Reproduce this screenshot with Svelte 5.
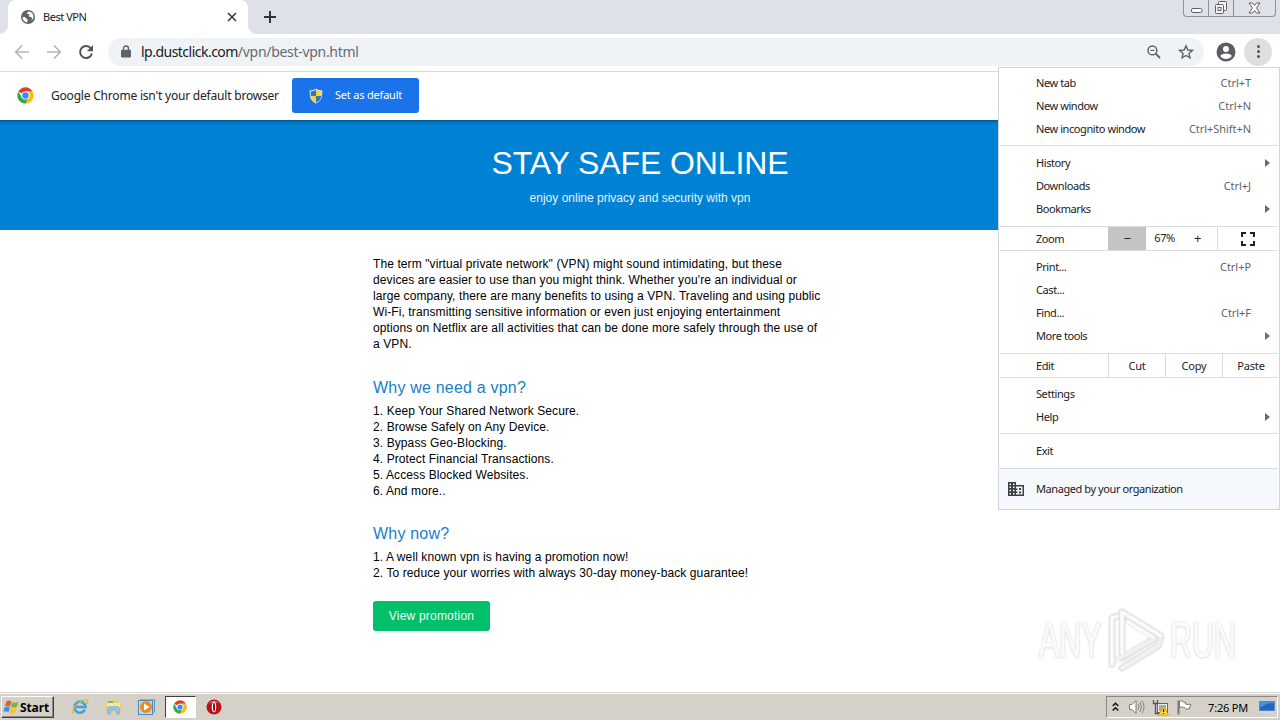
<script>
  const reasons = [
    'Keep Your Shared Network Secure.',
    'Browse Safely on Any Device.',
    'Bypass Geo-Blocking.',
    'Protect Financial Transactions.',
    'Access Blocked Websites.',
    'And more..'
  ];

  const offers = [
    'A well known vpn is having a promotion now!',
    'To reduce your worries with always 30-day money-back guarantee!'
  ];

  const windowItems = [
    { label: 'New tab', keys: 'Ctrl+T' },
    { label: 'New window', keys: 'Ctrl+N' },
    { label: 'New incognito window', keys: 'Ctrl+Shift+N' }
  ];

  const libraryItems = [
    { label: 'History', submenu: true },
    { label: 'Downloads', keys: 'Ctrl+J' },
    { label: 'Bookmarks', submenu: true }
  ];

  const pageItems = [
    { label: 'Print...', keys: 'Ctrl+P' },
    { label: 'Cast...' },
    { label: 'Find...', keys: 'Ctrl+F' },
    { label: 'More tools', submenu: true }
  ];

  const settingsItems = [{ label: 'Settings' }, { label: 'Help', submenu: true }];

  let zoom = $state(67);
  let menuOpen = $state(true);
</script>

{#snippet group(items, name)}
  <div class="menu-group {name}">
    {#each items as item}
      <div class="menu-item">
        <span class="label">{item.label}</span>
        {#if item.keys}<span class="keys">{item.keys}</span>{/if}
        {#if item.submenu}<span class="arrow"></span>{/if}
      </div>
    {/each}
  </div>
{/snippet}

{#snippet chromeLogo(size)}
  <svg width={size} height={size} viewBox="0 0 48 48">
    <circle cx="24" cy="24" r="23" fill="#fff" />
    <path d="M24 24 4.1 12.5A23 23 0 0 1 43.9 12.5H24Z" fill="#e33b2e" />
    <path d="M4.1 12.5A23 23 0 0 0 24 47L34 29.8 24 24 14 29.8Z" fill="#2da94f" />
    <path d="M43.9 12.5A23 23 0 0 1 24 47L34 29.8A11.5 11.5 0 0 0 24 12.5Z" fill="#fdbd00" />
    <circle cx="24" cy="24" r="11.5" fill="#fff" />
    <circle cx="24" cy="24" r="9" fill="#4285f4" />
  </svg>
{/snippet}

<div class="screen">
  <div class="tab-strip">
    <div class="tab">
      <svg width="14" height="14" viewBox="0 0 14 14">
        <circle cx="7" cy="7" r="7" fill="#5f6368" />
        <path d="M1.5 7.2c1.7-.3 3.4.2 3.6 1.1.3 1 1.7.8 1.7 1.8 0 .9-.7 1.3-.8 2.3-2.6-.4-4.5-2.6-4.5-5.2ZM7.5 1.5c-.7.8-1.7 1-1.4 2 .3.8 1.8.2 2.3 1 .4.8-1 1.2-.4 2 .6.8 1.900.1 2.600.9.6.7.3 1.800-.1 2.900 1.300-1 2-2.100 2-3.500 0-3-2.200-5.200-5-5.300Z" fill="#fff" />
      </svg>
      <span class="tab-title">Best VPN</span>
      <svg class="close" width="10" height="10" viewBox="0 0 10 10">
        <path d="M1 1 9 9M9 1 1 9" stroke="#3c4043" stroke-width="1.7" />
      </svg>
    </div>
    <svg class="new-tab" width="12" height="12" viewBox="0 0 12 12">
      <path d="M6 0V12M0 6H12" stroke="#303338" stroke-width="2" />
    </svg>
    <div class="window-buttons">
      <div class="win-btn small">
        <svg width="13" height="14" viewBox="0 0 13 14"><rect x="1.5" y="7.5" width="10.5" height="4" rx="1.5" fill="#fff" stroke="#5d6168" /></svg>
      </div>
      <div class="win-btn">
        <svg width="14" height="14" viewBox="0 0 14 14" fill="#f3f4f6" stroke="#5d6168"><rect x="4.5" y=".5" width="8" height="9" rx="1" /><rect x="1.5" y="3.5" width="8" height="9" rx="1" /><rect x="4" y="6.5" width="3" height="3" /></svg>
      </div>
      <div class="win-btn wide">
        <svg width="13" height="12" viewBox="0 0 13 12"><path d="M1 1h3.500L6.500 3.500 8.500 1H12L8.500 6 12 11H8.500L6.500 8.500 4.500 11H1L4.500 6Z" fill="#fff" stroke="#5d6168" /></svg>
      </div>
    </div>
  </div>

  <div class="toolbar">
    <svg class="nav-icon" width="16" height="16" viewBox="0 0 16 16" fill="none" stroke="#b4b6b9" stroke-width="1.7"><path d="M15 8H2M8 1.500 1.700 8 8 14.500" /></svg>
    <svg class="nav-icon" width="16" height="16" viewBox="0 0 16 16" fill="none" stroke="#b4b6b9" stroke-width="1.7"><path d="M1 8H14M8 1.500 14.300 8 8 14.500" /></svg>
    <svg class="nav-icon" width="16" height="16" viewBox="0 0 16 16"><path d="M12.900 4.400A6 6 0 1 0 13.900 9.500" fill="none" stroke="#505458" stroke-width="2" /><path d="M15 1V7.200H8.800Z" fill="#505458" /></svg>
    <div class="omnibox">
      <svg width="10" height="13" viewBox="0 0 10 13"><path d="M2.500 6V3.500a2.500 2.500 0 0 1 5 0V6" fill="none" stroke="#5f6368" stroke-width="1.4" /><rect y="4.7" width="10" height="7.8" rx="1" fill="#5f6368" /></svg>
      <span class="url"><span class="host">lp.dustclick.com</span><span class="path">/vpn/best-vpn.html</span></span>
      <svg class="zoom-icon" width="14" height="14" viewBox="0 0 14 14" fill="none" stroke="#5f6368" stroke-width="1.5"><circle cx="5.4" cy="5.4" r="4.4" /><path d="M8.600 8.600 13 13" stroke-width="1.9" /><path d="M3.400 5.400H7.400" stroke-width="1.2" /></svg>
      <svg class="star" width="16" height="16" viewBox="0 0 16 16"><path d="M8 1.800 9.800 6 14.400 6.400 10.900 9.400 12 13.900 8 11.500 4 13.900 5.100 9.400 1.600 6.400 6.200 6Z" fill="none" stroke="#5f6368" stroke-width="1.4" /></svg>
    </div>
    <svg class="avatar" width="20" height="20" viewBox="0 0 20 20"><circle cx="10" cy="10" r="9.5" fill="#5a5e63" /><circle cx="10" cy="7" r="3" fill="#fff" /><path d="M4.200 14C5.200 12.200 8 11.500 10 11.500s4.800.7 5.800 2.500a7 7 0 0 1-11.600 0Z" fill="#fff" /></svg>
    <button class="menu-button" aria-label="Menu" onclick={() => (menuOpen = !menuOpen)}>
      <i></i><i></i><i></i>
    </button>
  </div>

  <div class="infobar">
    {@render chromeLogo(17)}
    <span class="info-text">Google Chrome isn't your default browser</span>
    <button class="default-button">
      <svg width="14" height="16" viewBox="0 0 14 16">
        <path d="M7 .5C5 2 3 2.200.7 2.300.500 9 1.500 13 7 15.500 12.500 13 13.500 9 13.300 2.300 11 2.200 9 2 7 .5Z" fill="#dbe5ea" />
        <path d="M7 1.700C5.300 3 3.600 3.200 1.800 3.300V8H7Z" fill="#2d76c2" /><path d="M7 1.700C8.700 3 10.400 3.200 12.200 3.300V8H7Z" fill="#fbd328" />
        <path d="M1.800 8C2.300 11.300 3.500 13 7 14.500V8Z" fill="#fbd328" /><path d="M12.200 8C11.700 11.300 10.500 13 7 14.500V8Z" fill="#2d76c2" />
      </svg>
      <span>Set as default</span>
    </button>
  </div>

  <main>
    <header>
      <h1>STAY SAFE ONLINE</h1>
      <p>enjoy online privacy and security with vpn</p>
    </header>
    <article>
      <p class="intro">
        The term "virtual private network" (VPN) might sound intimidating, but these<br />
        devices are easier to use than you might think. Whether you're an individual or<br />
        large company, there are many benefits to using a VPN. Traveling and using public<br />
        Wi-Fi, transmitting sensitive information or even just enjoying entertainment<br />
        options on Netflix are all activities that can be done more safely through the use of<br />
        a VPN.
      </p>
      <h2>Why we need a vpn?</h2>
      <div class="list">
        {#each reasons as reason, i}
          <div>{i + 1}. {reason}</div>
        {/each}
      </div>
      <h2>Why now?</h2>
      <div class="list">
        {#each offers as offer, i}
          <div>{i + 1}. {offer}</div>
        {/each}
      </div>
      <button class="promo">View promotion</button>
    </article>
  </main>

  <div class="taskbar">
    <div class="start">
      <svg width="17" height="16" viewBox="0 0 17 16">
        <path d="M3.500 2.500C5.500 1 7 1.500 8.500 2.500L7 7.500C5.500 6.500 4 6.300 2 7.300Z" fill="#e8592b" />
        <path d="M9.300 3C11 4 13 4 15.500 2.500L14 7.500C12 9 9.700 9 7.800 8Z" fill="#76b83f" />
        <path d="M1.700 8.200C3.700 7.200 5.300 7.500 6.800 8.500L5.400 13.300C3.700 12.200 2.200 12 .3 13Z" fill="#3b8ede" />
        <path d="M7.600 9C9.500 10 11.500 10 13.700 8.500L12.300 13.200C10 15 8 14.500 6.200 13.700Z" fill="#f8c42d" />
      </svg>
      <span>Start</span>
    </div>
    <div class="quick">
      <svg width="18" height="18" viewBox="0 0 18 18">
        <path d="M14 11.500A5.500 5.500 0 1 1 14.500 9H5" fill="none" stroke="#38a3dc" stroke-width="2.6" />
        <path d="M2 15.500C-.500 12 9 1 15.500 2.200 17.500 2.800 16.500 5 15.500 6" fill="none" stroke="#dfb63a" stroke-width="1.3" />
      </svg>
    </div>
    <div class="quick">
      <svg width="17" height="16" viewBox="0 0 17 16">
        <path d="M1 2.500H6L7.500 1H13V4H16V13H1Z" fill="#edcc68" /><path d="M2 4H15V8H2Z" fill="#f9e79f" /><path d="M3 3H8" stroke="#4eb56d" stroke-width="1.5" />
        <path d="M2.500 15V9.500Q2.500 7.500 5 7.500H12Q14.500 7.500 14.500 9.500V15H11.500V11H5.500V15Z" fill="#8cc7eb" stroke="#62a3ca" stroke-width=".5" />
      </svg>
    </div>
    <div class="quick">
      <svg width="17" height="16" viewBox="0 0 17 16">
        <rect x="3" y="0" width="13.5" height="13" fill="#acd3ec" stroke="#5695c4" /><rect x=".5" y="1.5" width="14" height="14" fill="#b8dcf2" stroke="#4b8bbe" />
        <circle cx="8" cy="8" r="6" fill="#f18a1b" /><path d="M6 4.500V11.500L11.500 8Z" fill="#fff" />
      </svg>
    </div>
    <div class="quick pressed">{@render chromeLogo(14)}</div>
    <div class="quick">
      <svg width="16" height="16" viewBox="0 0 16 16"><circle cx="8" cy="8" r="7.5" fill="#bd1119" /><path d="M2.500 4.500A7 7 0 0 1 13.500 4.500Q8 1.800 2.500 4.500Z" fill="#e57a75" /><ellipse cx="8" cy="8" rx="2.2" ry="5.3" fill="#fff" /><ellipse cx="8" cy="8" rx="1" ry="4.5" fill="#8b0c12" /></svg>
    </div>
    <div class="tray">
      <svg class="chevrons" width="7" height="10" viewBox="0 0 7 10" fill="none" stroke="#111" stroke-width="1.5"><path d="M.7 4 3.500 1.300 6.300 4M.7 8.500 3.500 5.800 6.300 8.500" /></svg>
      <svg class="speaker" width="17" height="16" viewBox="0 0 17 16"><path d="M1.500 5.500H4L8 1.500V14.500L4 10.500H1.500Z" fill="#fbfbfb" stroke="#7c7c7c" /><path d="M10 5Q12 8 10 11M12 3Q15 8 12 13M14 1.500Q18 8 14 14.500" fill="none" stroke="#858585" /></svg>
      <svg class="network" width="17" height="17" viewBox="0 0 17 17"><rect x="5.5" y="4.5" width="10" height="9" fill="#eee" stroke="#666" /><rect x="7" y="6" width="7" height="6" fill="#aaa" /><path d="M1.500 1V4.500H5.500V1M3.500 4.500V14.500H8" fill="none" stroke="#555" stroke-width="1.3" /><path d="M11.500 7 16.500 16H6.500Z" fill="#fddb26" stroke="#c79412" stroke-width=".7" /><path d="M11.500 10V13M11.500 14V15" stroke="#222" stroke-width="1.2" /></svg>
      <svg class="flag" width="16" height="16" viewBox="0 0 16 16"><path d="M2.500 15.500V1.500" stroke="#777" stroke-width="2" /><path d="M3.500 2C6 1 7 3.500 9.500 3.500V5C11.500 6 13 5 15 5.500L13 10C10 10.500 8.500 9.500 8.500 8.500 6.500 8.500 6 7.500 3.500 8.500Z" fill="#fff" stroke="#777" /></svg>
      <span class="clock">7:26 PM</span>
      <svg class="desktop" width="16" height="13" viewBox="0 0 16 13"><path d="M.5.500H15.500V9.500H.5Z" fill="#2468bd" stroke="#5686bd" /><path d="M1 7Q7 2 15 2V1H1Z" fill="#4b92dc" /><path d="M1 11.500H15" stroke="#cddaea" stroke-width="1.5" /></svg>
    </div>
  </div>

  {#if menuOpen}
    <div class="menu">
      {@render group(windowItems, 'first')}
      {@render group(libraryItems, 'library')}
      <div class="menu-row">
        <span class="row-label">Zoom</span>
        <button class="zoom-out" aria-label="Zoom out" onclick={() => (zoom -= 1)}>−</button>
        <span class="zoom-value">{zoom}%</span>
        <button class="zoom-in" aria-label="Zoom in" onclick={() => (zoom += 1)}>+</button>
        <button class="fullscreen" aria-label="Full screen">
          <svg width="14" height="14" viewBox="0 0 14 14" fill="none" stroke="#202124" stroke-width="2"><path d="M1 5V1H5M9 1H13V5M13 9V13H9M5 13H1V9" /></svg>
        </button>
      </div>
      {@render group(pageItems, 'page')}
      <div class="menu-row">
        <span class="row-label">Edit</span>
        <button class="edit">Cut</button>
        <button class="edit">Copy</button>
        <button class="edit">Paste</button>
      </div>
      {@render group(settingsItems, 'settings')}
      {@render group([{ label: 'Exit' }], 'exit')}
      <div class="managed">
        <svg width="16" height="14" viewBox="0 0 16 14"><path d="M0 0H8V3H16V14H0Z" fill="#3c4043" /><path d="M1.500 1.500H3V3H1.500ZM5 1.500H6.500V3H5ZM1.500 4.500H3V6H1.500ZM5 4.500H6.500V6H5ZM1.500 7.700H3V9.200H1.500ZM5 7.700H6.500V9.200H5ZM1.500 11H3V12.500H1.500ZM5 11H6.500V12.500H5ZM8 4.500H14.500V12.500H8V11H9.500V9.500H8V8H9.500V6.500H8Z" fill="#f5f8fc" /><path d="M11 6H13V8H11ZM11 9.500H13V11.500H11Z" fill="#3c4043" /></svg>
        <span>Managed by your organization</span>
      </div>
    </div>
  {/if}

  <div class="watermark">
    <span>ANY</span>
    <svg width="56" height="64" viewBox="0 0 56 64" fill="none" stroke-linejoin="round" stroke-linecap="round">
      <g stroke="#e4e4e4" stroke-width="6">
        <path d="M4 56V10L9 8M14 4V45M14 4 53 28M20 12 48 30M53 28 50 38 14 60M14 50 46 31" />
      </g>
      <g stroke="#fbfbfb" stroke-width="3.5">
        <path d="M4 56V10L9 8M14 45V4L53 28M20 14 46 30" />
      </g>
      <g stroke="#f1f1f1" stroke-width="3.5">
        <path d="M52 32 50 38 14 60M8 52 46 31" />
      </g>
    </svg>
    <span>RUN</span>
  </div>
</div>

<style>
  :global(body) {
    overflow: hidden;
  }

  .screen {
    position: relative;
    display: flex;
    flex-direction: column;
    width: 1280px;
    height: 720px;
    overflow: hidden;
    background: #fff;
    font-family: 'Noto Sans', sans-serif;
    font-size: 11px;
    color: #202124;
  }

  button {
    margin: 0;
    padding: 0;
    border: none;
    background: none;
    font: inherit;
    color: inherit;
    letter-spacing: inherit;
  }

  svg {
    display: block;
    flex: none;
  }

  .tab-strip {
    display: flex;
    height: 34px;
    flex: none;
    padding-left: 8px;
    background: #dee1e7;
  }

  .tab {
    position: relative;
    display: flex;
    align-items: center;
    width: 240px;
    box-sizing: border-box;
    padding: 0 11px 0 13px;
    border-radius: 8px 8px 0 0;
    background: #fff;
  }

  /* flared feet where the tab meets the toolbar */
  .tab::before,
  .tab::after {
    content: '';
    position: absolute;
    bottom: 0;
    width: 8px;
    height: 8px;
  }

  .tab::before {
    left: -8px;
    background: radial-gradient(circle at 0 0, #dee1e7 7.5px, #fff 8px);
  }

  .tab::after {
    right: -8px;
    background: radial-gradient(circle at 100% 0, #dee1e7 7.5px, #fff 8px);
  }

  .tab-title {
    margin-left: 8px;
    padding-bottom: 2px;
    letter-spacing: -0.45px;
  }

  .close {
    margin-left: auto;
  }

  .new-tab {
    margin: 11px 0 0 16px;
  }

  .window-buttons {
    display: flex;
    height: 17px;
    margin: 0 4px 0 auto;
    border: 1px solid #8d9198;
    border-top: none;
    border-radius: 0 0 4px 4px;
    box-sizing: border-box;
  }

  .win-btn {
    display: flex;
    align-items: center;
    justify-content: center;
    width: 25px;
    box-sizing: border-box;
    border-right: 1px solid #8d9198;
  }

  .wide {
    width: 41px;
    border-right: none;
  }

  .toolbar {
    display: flex;
    align-items: center;
    height: 38px;
    flex: none;
    box-sizing: border-box;
    padding: 0 8px 2px 14px;
    border-bottom: 1px solid #dcdcdc;
  }

  .nav-icon {
    margin-right: 16px;
  }

  .omnibox {
    display: flex;
    align-items: center;
    width: 1096px;
    height: 28px;
    box-sizing: border-box;
    margin-left: -2px;
    padding: 0 10px 0 13px;
    border-radius: 14px;
    background: #f0f3f6;
  }

  .url {
    margin-left: 10px;
    font-size: 14px;
    white-space: nowrap;
  }

  .host {
    letter-spacing: -0.52px;
  }

  .path {
    color: #666a6e;
    letter-spacing: -0.3px;
  }

  .zoom-icon {
    margin-left: auto;
  }

  .star {
    margin-left: 17px;
  }

  .avatar {
    margin-left: 12px;
  }

  .menu-button {
    display: flex;
    flex-direction: column;
    align-items: center;
    justify-content: center;
    gap: 2px;
    width: 28px;
    height: 28px;
    margin-left: 8px;
    border-radius: 50%;
    background: #dedfe0;
  }

  .menu-button i {
    width: 3px;
    height: 3px;
    border-radius: 50%;
    background: #505458;
  }

  .infobar {
    display: flex;
    align-items: center;
    height: 48px;
    flex: none;
    box-sizing: border-box;
    padding: 0 0 1px 17px;
  }

  .info-text {
    width: 228px;
    margin: 0 13px 0 17px;
    padding-bottom: 1px;
    font-size: 12px;
    letter-spacing: -0.2px;
    white-space: nowrap;
  }

  .default-button {
    display: flex;
    align-items: center;
    width: 127px;
    height: 35px;
    padding-left: 17px;
    border-radius: 3px;
    background: #1a73e8;
    color: #fff;
  }

  .default-button span {
    margin-left: 12px;
    padding-bottom: 2px;
    letter-spacing: -0.2px;
  }

  main {
    flex: 1;
    font-family: 'Liberation Sans', Arial, sans-serif;
  }

  header {
    height: 110px;
    box-sizing: border-box;
    padding-top: 23px;
    background: linear-gradient(#005485, #0074bc 2px, #0082d4 5px);
    color: #fff;
    text-align: center;
  }

  h1 {
    margin: 0;
    font-size: 32px;
    font-weight: 400;
    line-height: 40px;
    letter-spacing: -0.1px;
  }

  header p {
    margin: 7px 0 0;
    font-size: 12px;
    line-height: 16px;
    color: #e3f2fc;
  }

  article {
    width: 534px;
    margin: 26px auto 0;
    font-size: 12px;
    line-height: 16px;
    letter-spacing: 0.1px;
    color: #000;
    white-space: nowrap;
  }

  .intro {
    margin: 0;
    padding-bottom: 1px;
  }

  h2 {
    height: 20px;
    margin: 25px 0 5px;
    font-size: 16px;
    font-weight: 400;
    line-height: 20px;
    letter-spacing: 0.2px;
    color: #1680c8;
  }

  .promo {
    display: block;
    width: 117px;
    height: 30px;
    margin-top: 20px;
    border-radius: 3px;
    background: #02bf6b;
    color: #eafff5;
    letter-spacing: 0.2px;
  }

  .taskbar {
    display: flex;
    align-items: center;
    height: 28px;
    flex: none;
    box-sizing: border-box;
    padding: 1px 2px 0 1px;
    border-top: 1px solid #d6d3ce;
    background: #d5d1c9;
    box-shadow: inset 0 1px #fff;
  }

  .start {
    display: flex;
    align-items: center;
    width: 53px;
    height: 22px;
    box-sizing: border-box;
    margin-right: 10px;
    padding-left: 1px;
    border: 1px solid;
    border-color: #fff #404040 #404040 #fff;
    box-shadow: inset -1px -1px #888;
    font-size: 12px;
    font-weight: 700;
    color: #000;
  }

  .start span {
    letter-spacing: -0.1px;
  }

  .quick {
    display: flex;
    align-items: center;
    justify-content: center;
    width: 31px;
    height: 22px;
    margin-right: 2.6px;
    box-sizing: border-box;
  }

  .pressed {
    border: 1px solid;
    border-color: #404040 #fff #fff #404040;
    background: #fdfdfc;
  }

  .tray {
    display: flex;
    align-items: center;
    width: 172px;
    height: 22px;
    box-sizing: border-box;
    margin-left: auto;
    padding: 0 2px 0 5px;
    border: 1px solid;
    border-color: #888 #fff #fff #888;
    color: #000;
  }

  .speaker {
    margin-left: 9px;
  }

  .network {
    margin-left: 7px;
  }

  .flag {
    margin-left: 7px;
  }

  .clock {
    margin-left: auto;
    letter-spacing: -0.2px;
  }

  .desktop {
    margin-left: 11px;
  }

  .menu {
    position: absolute;
    top: 67px;
    left: 998px;
    width: 282px;
    height: 443px;
    box-sizing: border-box;
    border: 1px solid #d3d5d8;
    background: #fff;
    letter-spacing: -0.42px;
  }

  .menu-group,
  .menu-row {
    margin: 0 1px;
    border-bottom: 1px solid #dadce0;
  }

  .first {
    padding: 4px 0;
  }

  .library,
  .exit {
    padding: 6px 0 5px;
  }

  .page {
    padding: 5px 0;
  }

  .settings {
    padding: 5px 0 4px;
  }

  .menu-item {
    display: flex;
    align-items: center;
    height: 23px;
    box-sizing: border-box;
    padding: 0 0 2px 36px;
  }

  .keys {
    margin: 0 27px 0 auto;
    color: #5f6368;
    letter-spacing: -0.05px;
  }

  .arrow {
    margin: 0 8px 0 auto;
    border: 4px solid transparent;
    border-left: 5px solid #6b6b6b;
    border-right: none;
  }

  .menu-row {
    display: flex;
    height: 23px;
    line-height: 23px;
  }

  .row-label {
    width: 72px;
    flex: none;
    padding-left: 36px;
  }

  .zoom-out {
    width: 38px;
    padding-bottom: 2px;
    background: #c4c4c4;
    font-size: 13px;
  }

  .zoom-value {
    width: 37px;
    line-height: 22px;
    text-align: center;
  }

  .zoom-in {
    width: 29px;
    margin-right: 5px;
    padding-bottom: 2px;
    font-size: 13px;
  }

  .fullscreen {
    display: flex;
    align-items: center;
    justify-content: center;
    flex: 1;
    border-left: 1px solid #dadce0;
  }

  .edit {
    width: 57px;
    flex: none;
    box-sizing: border-box;
    padding-bottom: 2px;
    border-left: 1px solid #dadce0;
    letter-spacing: -0.2px;
  }

  .managed {
    display: flex;
    align-items: center;
    height: 40px;
    padding-left: 9px;
    background: #f5f8fc;
  }

  .managed span {
    margin-left: 12px;
    padding-bottom: 2px;
  }

  .watermark {
    position: absolute;
    top: 608px;
    left: 1039px;
    display: flex;
    align-items: center;
    width: 196px;
    height: 64px;
    font-family: 'Liberation Sans Narrow', 'Liberation Sans', sans-serif;
    font-size: 50px;
    color: #fafafa;
    -webkit-text-stroke: 1px #fafafa;
    text-shadow: 0 0 2px #c4c4c4, 0 1px 3px #d4d4d4;
  }

  .watermark svg {
    margin: 0 6px 0 5px;
    filter: drop-shadow(0 0 1px #d5d5d5);
  }

  /* condensed lettering: each word is squeezed to its slot */
  .watermark span {
    width: 64px;
    transform: scaleX(0.61);
    transform-origin: left;
  }
</style>
